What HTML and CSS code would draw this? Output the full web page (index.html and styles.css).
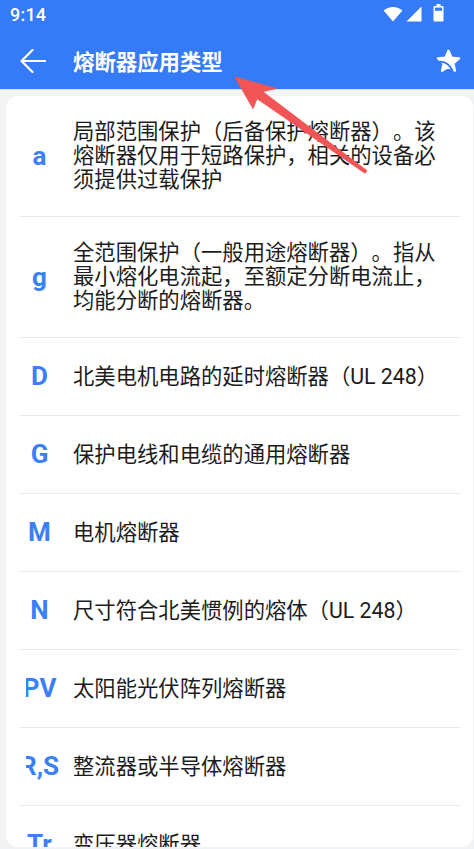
FILE: index.html
```html
<!DOCTYPE html>
<html lang="zh-CN">
<head>
<meta charset="utf-8">
<title>熔断器应用类型</title>
<link rel="stylesheet" href="styles.css">
</head>
<body>
<div class="screen">
  <header class="appbar">
    <div class="statusbar">
      <span class="time">9:14</span>
      <div class="status-icons">
        <svg class="wifi" width="20" height="16" viewBox="0 0 20 16"><path d="M10 15.5 L0.6 4.6 A14 14 0 0 1 19.4 4.6 Z" fill="#fff"/></svg>
        <svg class="signal" width="16" height="16" viewBox="0 0 16 16"><path d="M0.5 15.5 L15.5 15.5 L15.5 0.5 Z" fill="#fff"/></svg>
        <svg class="battery" width="11" height="18" viewBox="0 0 11 18"><rect x="3.5" y="0" width="4" height="2.5" fill="#fff"/><rect x="0.5" y="2" width="10" height="15.5" rx="1" fill="#fff"/><rect x="2" y="3.6" width="7" height="3.2" fill="#357af6"/></svg>
      </div>
    </div>
    <div class="toolbar">
      <svg class="back" width="26" height="24" viewBox="0 0 26 24"><path d="M25 12 H1.5 M12.5 1 L1.5 12 L12.5 23" fill="none" stroke="#fff" stroke-width="2.2" stroke-linecap="round" stroke-linejoin="round"/></svg>
      <h1 class="title">熔断器应用类型</h1>
      <svg class="star" width="27" height="27" viewBox="0 0 24 24"><path d="M12 2.4 L14.7 8.6 L21.4 9.2 L16.3 13.6 L17.8 20.2 L12 16.7 L6.2 20.2 L7.7 13.6 L2.6 9.2 L9.3 8.6 Z" fill="#fff" stroke="#fff" stroke-width="2" stroke-linejoin="round"/><path d="M3.2 12.2 Q11 11.4 15.4 19.8" fill="none" stroke="#357af6" stroke-width="1.7" stroke-linecap="round"/></svg>
    </div>
  </header>
  <main class="content">
    <div class="card">
      <div class="row"><div class="code"><div class="code-inner"><span>a</span></div></div><p class="desc">局部范围保护（后备保护熔断器）。该熔断器仅用于短路保护，相关的设备必须提供过载保护</p></div>
      <div class="row"><div class="code"><div class="code-inner"><span>g</span></div></div><p class="desc">全范围保护（一般用途熔断器）。指从最小熔化电流起，至额定分断电流止，均能分断的熔断器。</p></div>
      <div class="row"><div class="code"><div class="code-inner"><span>D</span></div></div><p class="desc">北美电机电路的延时熔断器（UL 248）</p></div>
      <div class="row"><div class="code"><div class="code-inner"><span>G</span></div></div><p class="desc">保护电线和电缆的通用熔断器</p></div>
      <div class="row"><div class="code"><div class="code-inner"><span>M</span></div></div><p class="desc">电机熔断器</p></div>
      <div class="row"><div class="code"><div class="code-inner"><span>N</span></div></div><p class="desc">尺寸符合北美惯例的熔体（UL 248）</p></div>
      <div class="row"><div class="code"><div class="code-inner"><span>PV</span></div></div><p class="desc">太阳能光伏阵列熔断器</p></div>
      <div class="row"><div class="code"><div class="code-inner"><span>R,S</span></div></div><p class="desc">整流器或半导体熔断器</p></div>
      <div class="row"><div class="code"><div class="code-inner"><span>Tr</span></div></div><p class="desc">变压器熔断器</p></div>
    </div>
  </main>
  <svg class="annotation" width="474" height="849" viewBox="0 0 474 849"><path d="M235 77 L276 88.5 L262.5 91.5 L367 170.8 L365 173.2 L257 98.6 L253 108.5 Z" fill="#f25555" stroke="#f25555" stroke-width="1" stroke-linejoin="round"/></svg>
</div>
</body>
</html>
```
FILE: styles.css
```css
html, body {
  margin: 0;
  padding: 0;
}
body {
  width: 474px;
  height: 849px;
  overflow: hidden;
  background: #f2f3f5;
  font-family: Roboto, "Noto Sans CJK SC", sans-serif;
}
.screen {
  position: relative;
  width: 474px;
  height: 849px;
  display: flex;
  flex-direction: column;
}
.appbar {
  background: #357af6;
  color: #fff;
  border-bottom: 1px solid #d3e0f6;
}
.statusbar {
  height: 28px;
  display: flex;
  align-items: center;
  justify-content: space-between;
  padding: 0 30px 0 10px;
}
.time {
  font-family: Roboto, sans-serif;
  font-weight: 500;
  font-size: 18px;
  letter-spacing: 0.2px;
}
.status-icons {
  display: flex;
  align-items: center;
  gap: 3px;
}
.signal { margin-right: 8px; }
.battery { margin-top: -3px; }
.toolbar {
  height: 56px;
  padding-top: 5px;
  display: flex;
  align-items: center;
  padding-left: 20px;
  padding-right: 12px;
}
.back { flex-shrink: 0; }
.title {
  margin: 0 0 0 27px;
  flex: 1;
  font-family: "Noto Sans CJK SC", sans-serif;
  font-weight: 700;
  font-size: 21.4px;
  line-height: 28px;
  color: #fff;
}
.star { flex-shrink: 0; }
.content {
  flex: 1;
  padding: 6px 1px 2px 6px;
  min-height: 0;
}
.card {
  height: 751px;
  background: #fff;
  border-radius: 12px;
  overflow: hidden;
}
.row {
  margin: 0 12px 0 13px;
  padding: 24px 16px 24px 7px;
  display: flex;
  align-items: center;
  border-bottom: 1px solid #ebebeb;
}
.code {
  width: 47px;
  flex-shrink: 0;
  overflow: hidden;
}
.code-inner {
  width: 27px;
  display: flex;
  justify-content: center;
}
.code-inner span {
  flex-shrink: 0;
  white-space: nowrap;
  font-family: Roboto, sans-serif;
  font-weight: 700;
  font-size: 26px;
  line-height: 29px;
  color: #3b80f6;
}
.desc {
  margin: 0;
  flex: 1;
  font-family: Roboto, "Noto Sans CJK SC", sans-serif;
  font-size: 21.33px;
  line-height: 24px;
  color: #1c1c1c;
  text-spacing-trim: space-all;
}
.annotation {
  position: absolute;
  left: 0;
  top: 0;
  pointer-events: none;
}
```
